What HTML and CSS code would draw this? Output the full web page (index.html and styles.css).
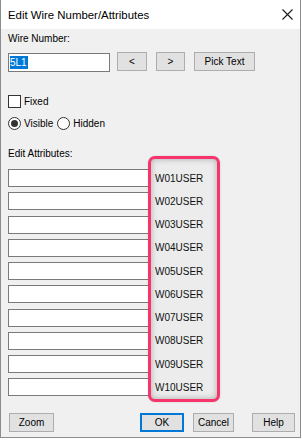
FILE: index.html
```html
<!DOCTYPE html>
<html>
<head>
<meta charset="utf-8">
<link rel="stylesheet" href="styles.css">
</head>
<body>
<div class="window">
  <div class="titlebar">
    <span class="title">Edit Wire Number/Attributes</span>
    <svg class="close" width="11" height="11" viewBox="0 0 11 11"><path d="M0.5 0.5L10.5 10.5M10.5 0.5L0.5 10.5" stroke="#1a1a1a" stroke-width="1.1" fill="none"/></svg>
  </div>
  <div class="content">
    <div class="label wn">Wire Number:</div>
    <div class="wire-row">
      <div class="textbox"><span class="sel">5L1</span></div>
      <div class="btn arrow lt">&lt;</div>
      <div class="btn arrow gt">&gt;</div>
      <div class="btn pick">Pick Text</div>
    </div>
    <div class="check-row"><span class="checkbox"></span><span class="opt">Fixed</span></div>
    <div class="radio-row">
      <span class="radio on"></span><span class="opt">Visible</span>
      <span class="radio hidden-r"></span><span class="opt">Hidden</span>
    </div>
    <div class="label ea">Edit Attributes:</div>
    <div class="attrs">
      <div class="field"></div><div class="tag">W01USER</div>
      <div class="field"></div><div class="tag">W02USER</div>
      <div class="field"></div><div class="tag">W03USER</div>
      <div class="field"></div><div class="tag">W04USER</div>
      <div class="field"></div><div class="tag">W05USER</div>
      <div class="field"></div><div class="tag">W06USER</div>
      <div class="field"></div><div class="tag">W07USER</div>
      <div class="field"></div><div class="tag">W08USER</div>
      <div class="field"></div><div class="tag">W09USER</div>
      <div class="field"></div><div class="tag">W10USER</div>
      <div class="highlight"></div>
    </div>
    <div class="footer">
      <div class="btn zoom">Zoom</div>
      <div class="btn ok">OK</div>
      <div class="btn cancel">Cancel</div>
      <div class="btn help">Help</div>
    </div>
  </div>
</div>
</body>
</html>
```

FILE: styles.css
```css
* { box-sizing: border-box; }
html, body { margin: 0; padding: 0; background: #ffffff; }
body {
  font-family: "Liberation Sans", Arial, sans-serif;
  font-size: 10px;
  color: #000;
  width: 302px;
  height: 440px;
  overflow: hidden;
}
.window {
  width: 301px;
  height: 438px;
  border-left: 1px solid #8c8c8c;
  border-right: 1px solid #8c8c8c;
  border-bottom: 1px solid #8c8c8c;
  background: #f0f0f0;
  display: flex;
  flex-direction: column;
}
.titlebar {
  height: 29px;
  background: #ffffff;
  display: flex;
  align-items: center;
  padding-left: 7px;
  padding-right: 8px;
}
.title {
  font-family: "Liberation Sans", Arial, sans-serif;
  font-size: 11.4px;
  line-height: 15px;
  margin-top: 1px;
  flex: 1;
  color: #000;
}
.close { display: block; margin-right: -1px; }
.content {
  padding-left: 7px;
  padding-right: 5px;
  display: flex;
  flex-direction: column;
}
.label { line-height: 15px; height: 15px; color: #000; }
.wn { margin-top: 2px; }
.wire-row {
  margin-top: 6px;
  display: flex;
  align-items: flex-start;
  height: 20px;
}
.textbox {
  width: 102px;
  height: 19px;
  margin-top: 1px;
  background: #fff;
  border: 1px solid #7a7a7a;
  padding: 2px 0 0 1px;
}
.sel {
  display: block;
  width: 18px;
  height: 13px;
  background: #0078d7;
  color: #fff;
  line-height: 13px;
}
.btn {
  height: 19px;
  background: #e1e1e1;
  border: 1px solid #adadad;
  display: flex;
  align-items: center;
  justify-content: center;
  line-height: 15px;
  color: #000;
}
.arrow { width: 30px; }
.lt { margin-left: 7px; }
.gt { margin-left: 9px; width: 29px; }
.pick { margin-left: 9px; width: 61px; }
.check-row, .radio-row {
  display: flex;
  align-items: center;
  height: 13px;
}
.check-row { margin-top: 23px; }
.radio-row { margin-top: 9px; }
.checkbox {
  width: 13px;
  height: 13px;
  border: 1px solid #333;
  background: #fff;
}
.opt { margin-left: 3px; line-height: 15px; color: #000; }
.radio {
  width: 13px;
  height: 13px;
  border: 1px solid #333;
  border-radius: 50%;
  background: #fff;
  display: flex;
  align-items: center;
  justify-content: center;
}
.radio.on::after {
  content: "";
  width: 7px;
  height: 7px;
  border-radius: 50%;
  background: #333;
}
.hidden-r { margin-left: 4px; }
.ea { margin-top: 16px; }
.attrs {
  position: relative;
  margin-top: 8px;
  display: grid;
  grid-template-columns: 141px auto;
  grid-auto-rows: 18px;
  row-gap: 5.25px;
  column-gap: 6px;
  align-items: center;
}
.field {
  height: 18px;
  background: #fff;
  border: 1px solid #7a7a7a;
}
.tag {
  position: relative;
  z-index: 2;
  line-height: 15px;
  color: #111;
}
.highlight {
  position: absolute;
  left: 140px;
  top: -13px;
  width: 72px;
  height: 246px;
  border: 3px solid #f7346b;
  border-radius: 7px;
  background: #ececec;
  box-shadow: inset 0 0 6px rgba(0,0,0,0.28), 0 0 2px rgba(0,0,0,0.15);
  z-index: 1;
}
.footer {
  margin-top: 17px;
  display: flex;
  height: 19px;
}
.zoom { width: 45px; margin-left: 1px; }
.ok { width: 44px; margin-left: auto; border: 2px solid #0078d7; }
.cancel { width: 41px; margin-left: 9px; }
.help { width: 43px; margin-left: 18px; }
```
